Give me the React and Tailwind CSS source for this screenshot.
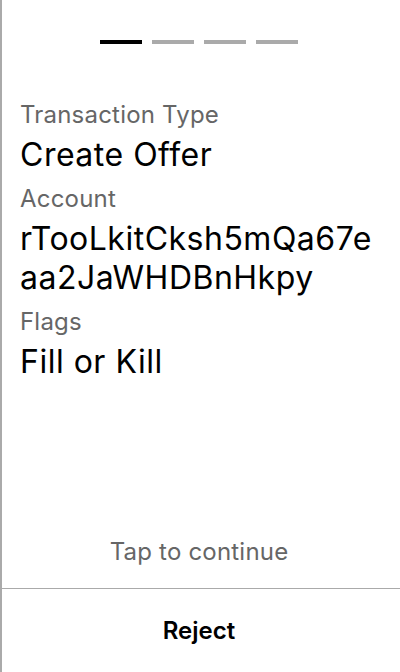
import React from 'react';

const Field = ({ label, value }) => (
  <div className="flex flex-col">
    <p className="text-[24px] leading-[36px] tracking-[0.2px] text-[#666666]">{label}</p>
    <p className="mt-[2px] text-[32px] leading-[39px] tracking-[0.5px] text-black break-all">{value}</p>
  </div>
);

const App = () => {
  return (
    <div
      className="h-[672px] w-[400px] flex flex-col bg-white border-l-2 border-[#aaaaaa]"
      style={{ fontFamily: 'Inter, "Noto Sans", sans-serif' }}
    >
      {/* progress */}
      <div className="flex justify-center gap-[10px] pt-[40px] pr-[4px]">
        <div className="h-[4px] w-[42px] bg-black" />
        <div className="h-[4px] w-[42px] bg-[#aaaaaa]" />
        <div className="h-[4px] w-[42px] bg-[#aaaaaa]" />
        <div className="h-[4px] w-[42px] bg-[#aaaaaa]" />
      </div>

      {/* details */}
      <div className="flex flex-col gap-[7px] px-[18px] pt-[53px]">
        <Field label="Transaction Type" value="Create Offer" />
        <Field label="Account" value="rTooLkitCksh5mQa67eaa2JaWHDBnHkpy" />
        <Field label="Flags" value="Fill or Kill" />
      </div>

      <div className="flex-1" />

      <p className="text-center text-[24px] leading-[32px] tracking-[0.2px] text-[#666666] pb-[20px] pr-[4px]">Tap to continue</p>

      <div className="border-t border-[#aaaaaa] h-[84px] flex items-center justify-center pr-[4px]">
        <span className="text-[24px] leading-[32px] font-semibold text-black">Reject</span>
      </div>
    </div>
  );
};

export default App;
